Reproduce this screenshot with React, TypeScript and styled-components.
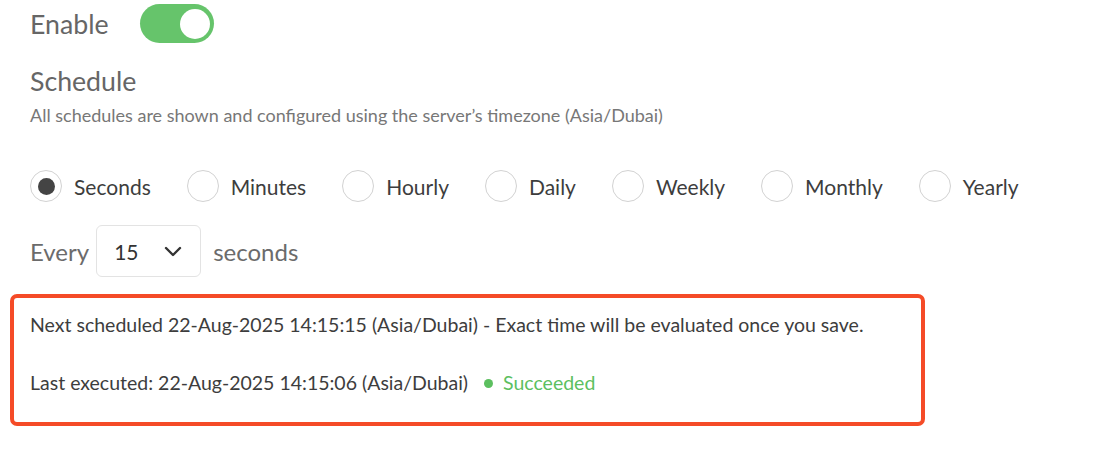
import React from 'react';
import styled, {createGlobalStyle} from 'styled-components';

const GlobalStyle = createGlobalStyle`
  body {
    margin: 0;
    background: #fff;
    font-family: Lato, "Open Sans", sans-serif;
  }
`

const Page = styled.div`
  padding: 4px 0 0 30px;
  display: flex;
  flex-direction: column;
`
const EnableRow = styled.div`
  display: flex;
  align-items: center;
  gap: 31px;
  height: 39px;
`
const Heading = styled.span`
  font-size: 26.7px;
  line-height: 32px;
  color: #666;
`
const Toggle = styled.div<{ $on: boolean }>`
  width: 74px;
  height: 39px;
  border-radius: 20px;
  background: ${p => (p.$on ? '#66c46b' : '#ccc')};
  display: flex;
  align-items: center;
  justify-content: ${p => (p.$on ? 'flex-end' : 'flex-start')};
  padding: 0 4px;
  box-sizing: border-box;
`
const Knob = styled.div`
  width: 30px;
  height: 30px;
  border-radius: 50%;
  background: #fff;
`
const ScheduleTitle = styled(Heading)`
  margin-top: 22px;
`
const Description = styled.p`
  margin: 7px 0 0;
  font-size: 18px;
  line-height: 22px;
  color: #777;
`
const RadioGroup = styled.div`
  display: flex;
  align-items: center;
  margin-top: 44px;
  gap: 36px;
`
const RadioItem = styled.label`
  display: flex;
  align-items: center;
  gap: 12px;
  font-size: 21px;
  color: #3d3d3d;
`
const RadioCircle = styled.span<{ $checked: boolean }>`
  width: 32px;
  height: 32px;
  border-radius: 50%;
  border: 1px solid #d2d2d2;
  box-sizing: border-box;
  display: flex;
  align-items: center;
  justify-content: center;

  &::after {
    content: '';
    width: 17px;
    height: 17px;
    border-radius: 50%;
    background: #444;
    display: ${p => (p.$checked ? 'block' : 'none')};
  }
`
const EveryRow = styled.div`
  display: flex;
  align-items: center;
  margin-top: 23px;
  font-size: 24px;
  color: #6b6b6b;
`
const Select = styled.div`
  width: 105px;
  height: 52px;
  margin: 0 12px 0 7px;
  border: 1px solid #e3e3e3;
  border-radius: 6px;
  box-sizing: border-box;
  display: flex;
  align-items: center;
  justify-content: space-between;
  padding: 0 18px 0 17px;
  font-size: 21px;
  color: #333;
`
const InfoBox = styled.div`
  margin: 17px 0 0 -20px;
  width: 915px;
  height: 132px;
  box-sizing: border-box;
  border: 4px solid #f54b27;
  border-radius: 7px;
  padding: 15px 0 0 16px;
  display: flex;
  flex-direction: column;
  gap: 34px;
  font-size: 19.5px;
  color: #3d3d3d;
`
const InfoLine = styled.div`
  display: flex;
  align-items: center;
  line-height: 24px;
`
const Status = styled.span`
  display: inline-flex;
  align-items: center;
  gap: 10px;
  margin-left: 16px;
  color: #5cbf5f;

  &::before {
    content: '';
    width: 9px;
    height: 9px;
    border-radius: 50%;
    background: #5cbf5f;
  }
`

const options = ['Seconds', 'Minutes', 'Hourly', 'Daily', 'Weekly', 'Monthly', 'Yearly'];

export default function App() {
  return (
    <>
      <GlobalStyle/>
      <Page>
        <EnableRow>
          <Heading>Enable</Heading>
          <Toggle $on><Knob/></Toggle>
        </EnableRow>
        <ScheduleTitle>Schedule</ScheduleTitle>
        <Description>All schedules are shown and configured using the server’s timezone (Asia/Dubai)</Description>
        <RadioGroup>
          {options.map((v, i) => (
            <RadioItem key={`opt-${i}`}>
              <RadioCircle $checked={i === 0}/>
              {v}
            </RadioItem>
          ))}
        </RadioGroup>
        <EveryRow>
          <span>Every</span>
          <Select>
            <span>15</span>
            <svg width="18" height="11" viewBox="0 0 18 11" fill="none">
              <path d="M2 2l7 7 7-7" stroke="#333" strokeWidth="2.4" strokeLinecap="round" strokeLinejoin="round"/>
            </svg>
          </Select>
          <span>seconds</span>
        </EveryRow>
        <InfoBox>
          <InfoLine>Next scheduled 22-Aug-2025 14:15:15 (Asia/Dubai) - Exact time will be evaluated once you save.</InfoLine>
          <InfoLine>
            Last executed: 22-Aug-2025 14:15:06 (Asia/Dubai)
            <Status>Succeeded</Status>
          </InfoLine>
        </InfoBox>
      </Page>
    </>
  );
}
